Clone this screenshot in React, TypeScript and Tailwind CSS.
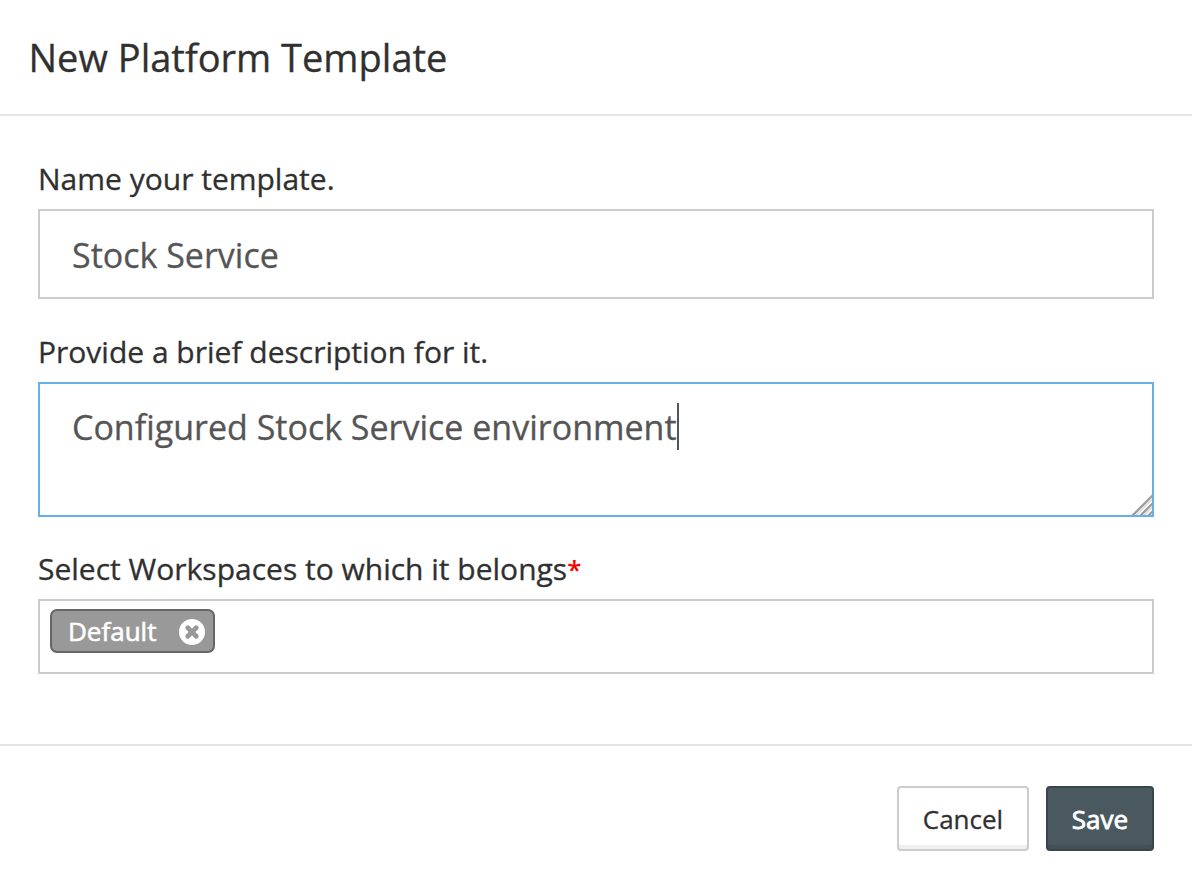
export default function App() {
  return (
    <main className="flex h-[890px] w-[1192px] flex-col bg-white font-['Open_Sans','Noto_Sans',sans-serif] text-[#303030] [-webkit-text-stroke:0.3px_currentColor]">
      <header className="flex h-[116px] items-center border-b-2 border-[#e5e5e5] px-[28.5px]">
        <h1 className="whitespace-nowrap text-[38px] leading-[52px]">New Platform Template</h1>
      </header>
      <section className="flex h-[630px] flex-col border-b-2 border-[#e5e5e5] px-[38px] pt-[42px]">
        <label className="h-[51px] text-[30px] leading-[42px]"><span>Name your template.</span></label>
        <div className="flex h-[90px] shrink-0 items-center border-2 border-[#ccc] px-8 pt-0.5 text-[34px] text-[#555]"><span>Stock Service</span></div>
        <label className="mt-[32px] h-[51px] text-[30px] leading-[42px]"><span>Provide a brief description for it.</span></label>
        <div className="relative flex h-[135px] shrink-0 items-start border-2 border-[#66afe9] px-8 pt-[19px] text-[34px] leading-[48px] text-[#555]">
          <span>Configured Stock Service environment</span>
          <i className="h-[47px] w-[2px] bg-[#555]" />
          <svg className="absolute right-0 bottom-0" width="21" height="21" viewBox="0 0 21 21" strokeWidth="2.2">
            <path stroke="#999" d="M1 22 22 1M9 22 22 9M17 22 22 17" />
            <path stroke="#ddd" strokeWidth="2" d="M4 22 22 4M12 22 22 12" />
          </svg>
        </div>
        <label className="mt-[31px] flex h-[51px] text-[30px] leading-[42px]"><span>Select Workspaces to which it belongs</span><span className="text-[26px] font-semibold text-[#f00] [-webkit-text-stroke:0]">*</span></label>
        <div className="h-[75px] shrink-0 border-2 border-[#ccc] px-[10px] pt-2">
          <div className="flex h-[44px] w-[165px] items-center justify-between rounded-[7px] border-2 border-[#666] bg-[#999] pr-[8.5px] pl-4 text-[26px] text-white [-webkit-text-stroke:0.6px_currentColor]">
            <span>Default</span>
            <svg className="mt-0.5" width="26" height="26" viewBox="0 0 26 26"><circle cx="13" cy="13" r="13" fill="white" /><path d="m8.8 8.8 8.4 8.4m0-8.4-8.4 8.4" stroke="#999" strokeWidth="4.8" strokeLinecap="round" /></svg>
          </div>
        </div>
      </section>
      <footer className="flex justify-end gap-[17px] px-[38px] pt-10 text-[26px]">
        <button className="h-[65px] w-[132px] rounded-[4px] border-2 border-[#ccc] pt-0.5 shadow-[inset_0_-4px_0_#f0f0f0]">Cancel</button>
        <button className="h-[65px] w-[108px] rounded-[4px] border-2 border-[#38454b] bg-[#4a5960] pt-0.5 text-white shadow-[inset_0_-4px_0_#435056] [-webkit-text-stroke:0.8px_currentColor]">Save</button>
      </footer>
    </main>
  );
}
